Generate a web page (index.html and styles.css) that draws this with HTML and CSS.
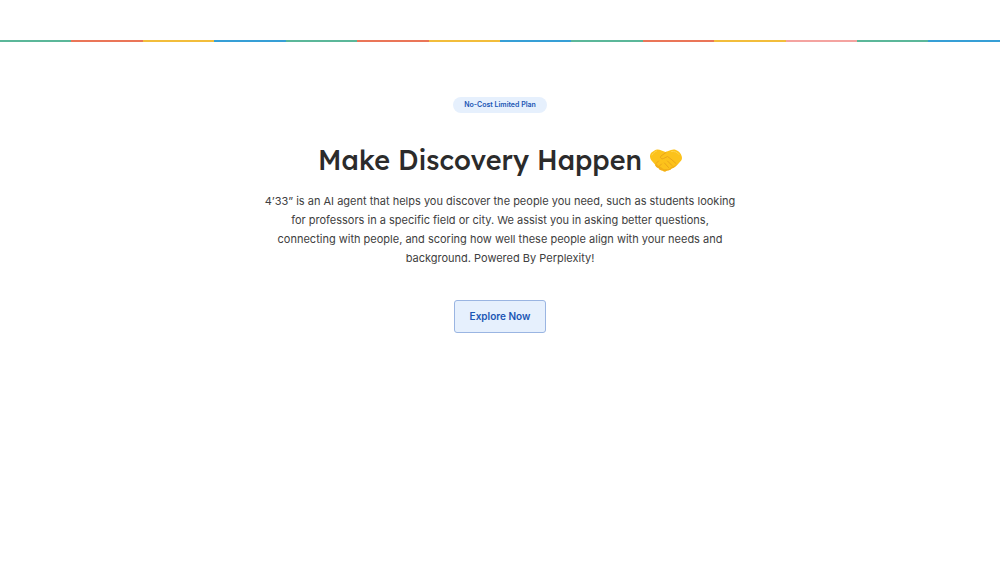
FILE: index.html
```html
<!DOCTYPE html>
<html lang="en">
<head>
    <meta charset="UTF-8">
    <meta name="viewport" content="width=device-width, initial-scale=1.0">
    <title>4’33” - Make Discovery Happen</title>
    <link rel="stylesheet" href="styles.css">
</head>
<body>

    <div class="stripe">
        <span class="green"></span>
        <span class="red"></span>
        <span class="yellow"></span>
        <span class="blue"></span>
        <span class="green"></span>
        <span class="red"></span>
        <span class="yellow"></span>
        <span class="blue"></span>
        <span class="green"></span>
        <span class="red"></span>
        <span class="yellow"></span>
        <span class="pink"></span>
        <span class="green"></span>
        <span class="blue"></span>
    </div>

    <main class="hero">
        <span class="badge">No-Cost Limited Plan</span>
        <h1>
            Make Discovery Happen
            <svg class="handshake" viewBox="0 0 64 46" role="img" aria-label="handshake">
                <path fill="#fcc21b" d="M9 3 C13 0 18 1 23 3 L31 6 L42 2 C47 0 52 1 56 4 C61 8 64 13 64 18 C64 22 61 25 58 28 L52 34 C49 37 46 39 43 39 C40 42 37 43 34 43 C31 46 27 45 25 43 C21 43 18 41 17 38 C13 37 11 34 10 31 L3 23 C-1 18 -1 11 3 7 Z"/>
                <path fill="#f3af18" d="M10 31 C11 35 13 37 17 38 C18 41 21 43 25 43 C27 45 31 46 34 43 C39 43 42 41 43 39 C48 38 53 33 58 28 C52 32 48 35 44 35 C40 39 36 41 32 40 C28 41 24 39 22 36 C18 36 15 33 14 30 Z"/>
                <path fill="none" stroke="#eba51a" stroke-width="2" stroke-linecap="round" stroke-linejoin="round" d="M32 7 L22 14 C19 17 23 21 27 19 L35 15 C41 19 47 24 52 29 M35 24 L44 33 M29 28 L37 37 M12 29 L17 24 M18 35 L23 30"/>
                <path fill="none" stroke="#ffd54a" stroke-width="2" stroke-linecap="round" d="M4 12 C6 8 9 6 13 4 M43 5 C49 4 54 6 58 11"/>
            </svg>
        </h1>
        <p>4’33” is an AI agent that helps you discover the people you need, such as students looking for professors in a specific field or city. We assist you in asking better questions, connecting with people, and scoring how well these people align with your needs and background. Powered By Perplexity!</p>
        <button type="button">Explore Now</button>
    </main>

</body>
</html>
```
FILE: styles.css
```css
body {
    margin: 0;
    padding-top: 40px;
    font-family: Inter, "Liberation Sans", sans-serif;
    background-color: #fff;
    color: #404040;
}
.stripe {
    display: flex;
    height: 2px;
}
.stripe span {
    flex: 1;
}
.green {
    background-color: #5bb799;
}
.red {
    background-color: #ea7558;
}
.yellow {
    background-color: #f2bd3b;
}
.blue {
    background-color: #369fd6;
}
.pink {
    background-color: #f4a3a0;
}
.hero {
    display: flex;
    flex-direction: column;
    align-items: center;
    max-width: 476px;
    margin: 0 auto;
    padding: 55px 20px;
    text-align: center;
}
.badge {
    padding: 0 11px;
    border-radius: 8px;
    background-color: #e6f0fd;
    color: #1a56b4;
    font-size: 7px;
    font-weight: 600;
    line-height: 16px;
}
h1 {
    display: flex;
    align-items: center;
    gap: 8px;
    margin: 29px 0 14px;
    color: #2b2b2b;
    font-family: Lexend, Inter, sans-serif;
    font-size: 27px;
    font-weight: 500;
    line-height: 36px;
    white-space: nowrap;
}
.handshake {
    width: 32px;
    height: 23px;
}
p {
    margin: 0 0 32px;
    font-size: 11px;
    line-height: 19px;
}
button {
    padding: 0 15px;
    border: 1px solid #9ab5e2;
    border-radius: 3px;
    background-color: #e6f0fd;
    color: #1a56b4;
    font-family: inherit;
    font-size: 10px;
    font-weight: 600;
    line-height: 31px;
    cursor: pointer;
}
button:hover {
    background-color: #d8e7fc;
}
```
